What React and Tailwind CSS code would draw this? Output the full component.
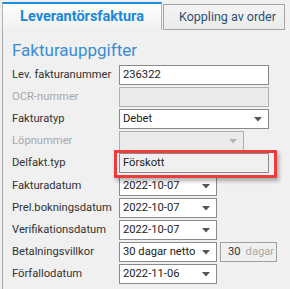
import React from "react";

const Arrow = ({ disabled }) => (
  <svg width="8" height="5" viewBox="0 0 8 5" className="shrink-0">
    <path d="M0 0 H8 L4 4.5 Z" fill={disabled ? "#b4b4b4" : "#555"} />
  </svg>
);

const Label = ({ children, disabled }) => (
  <div
    className={`w-[107px] shrink-0 whitespace-nowrap text-[11.2px] leading-none ${
      disabled ? "text-[#a8a8a8]" : "text-[#333]"
    }`}
  >
    {children}
  </div>
);

const Row = ({ children }) => (
  <div className="flex items-center h-[20px] mb-[2px]">{children}</div>
);

const TextBox = ({ value, disabled, w = "w-[150px]" }) => (
  <div
    className={`${w} h-[20px] border flex items-center px-[3px] text-[11.2px] text-[#222] ${
      disabled ? "bg-[#ebebeb] border-[#b0b0b0]" : "bg-white border-[#8a8a8a]"
    }`}
  >
    {value}
  </div>
);

const Select = ({ value, disabled, w }) => (
  <div
    className={`${w} h-[20px] border flex items-center justify-between pl-[3px] pr-[6px] text-[11.2px] text-[#222] whitespace-nowrap ${
      disabled ? "bg-[#ebebeb] border-[#b0b0b0]" : "bg-white border-[#8a8a8a]"
    }`}
  >
    <span>{value}</span>
    <Arrow disabled={disabled} />
  </div>
);

export default function App() {
  return (
    <div
      className="w-[290px] h-[289px] bg-[#f0f0f0] overflow-hidden"
      style={{ fontFamily: 'Roboto, "Liberation Sans", sans-serif' }}
    >
      {/* Tabs */}
      <div className="flex items-end h-[30px] pl-[2px] pt-[2px]">
        <div className="w-[160px] h-[28px] border-t-2 border-t-[#1a8fe3] border-x border-x-[#b4b4b4] bg-gradient-to-b from-white to-[#f0f0f0] flex items-center justify-center">
          <span className="text-[14.5px] font-bold text-[#1a87d8] leading-none">
            Leverantörsfaktura
          </span>
        </div>
        <div className="ml-[1px] w-[122px] h-[26px] border border-[#a4a4a4] bg-gradient-to-b from-[#f4f4f4] to-[#ebebeb] flex items-center pl-[15px]">
          <span className="text-[12.5px] text-[#2f4f70] leading-none whitespace-nowrap">
            Koppling av order
          </span>
        </div>
      </div>

      {/* Panel */}
      <div className="ml-[2px] h-[259px] border-l border-[#a8a8a8] pl-[9px]">
        <div className="h-[35px] flex items-center pt-[5px]">
          <span className="text-[17px] text-[#3a8cd6] leading-none">
            Fakturauppgifter
          </span>
        </div>

        <Row>
          <Label>Lev. fakturanummer</Label>
          <TextBox value="236322" />
        </Row>
        <Row>
          <Label disabled>OCR-nummer</Label>
          <TextBox value="" disabled />
        </Row>
        <Row>
          <Label>Fakturatyp</Label>
          <Select value="Debet" w="w-[150px]" />
        </Row>
        <Row>
          <Label disabled>Löpnummer</Label>
          <Select value="" disabled w="w-[125px]" />
        </Row>
        <Row>
          <Label>Delfakt.typ</Label>
          <div className="relative">
            <div className="w-[150px] h-[20px] border border-[#8a8a8a] bg-[#f0f0f0] flex items-center px-[3px] text-[11.2px] text-[#222]">
              Förskott
            </div>
            <div className="absolute -left-[5px] -right-[8px] -top-[3px] -bottom-[5px] border-[3px] border-[#ee3b3b] shadow-[2px_3px_4px_rgba(0,0,0,0.3)]" />
          </div>
        </Row>
        <div className="h-[1px]" />
        <Row>
          <Label>Fakturadatum</Label>
          <Select value="2022-10-07" w="w-[98px]" />
        </Row>
        <Row>
          <Label>Prel.bokningsdatum</Label>
          <Select value="2022-10-07" w="w-[98px]" />
        </Row>
        <Row>
          <Label>Verifikationsdatum</Label>
          <Select value="2022-10-07" w="w-[98px]" />
        </Row>
        <Row>
          <Label>Betalningsvillkor</Label>
          <Select value="30 dagar netto" w="w-[98px]" />
          <div className="ml-[3px] w-[57px] h-[20px] border border-[#a0a0a0] bg-[#f0f0f0] flex items-center pl-[7px] gap-[5px] text-[11.2px] whitespace-nowrap">
            <span className="text-[#333]">30</span>
            <span className="text-[#aaa]">dagar</span>
          </div>
        </Row>
        <Row>
          <Label>Förfallodatum</Label>
          <Select value="2022-11-06" w="w-[98px]" />
        </Row>
      </div>
    </div>
  );
}
